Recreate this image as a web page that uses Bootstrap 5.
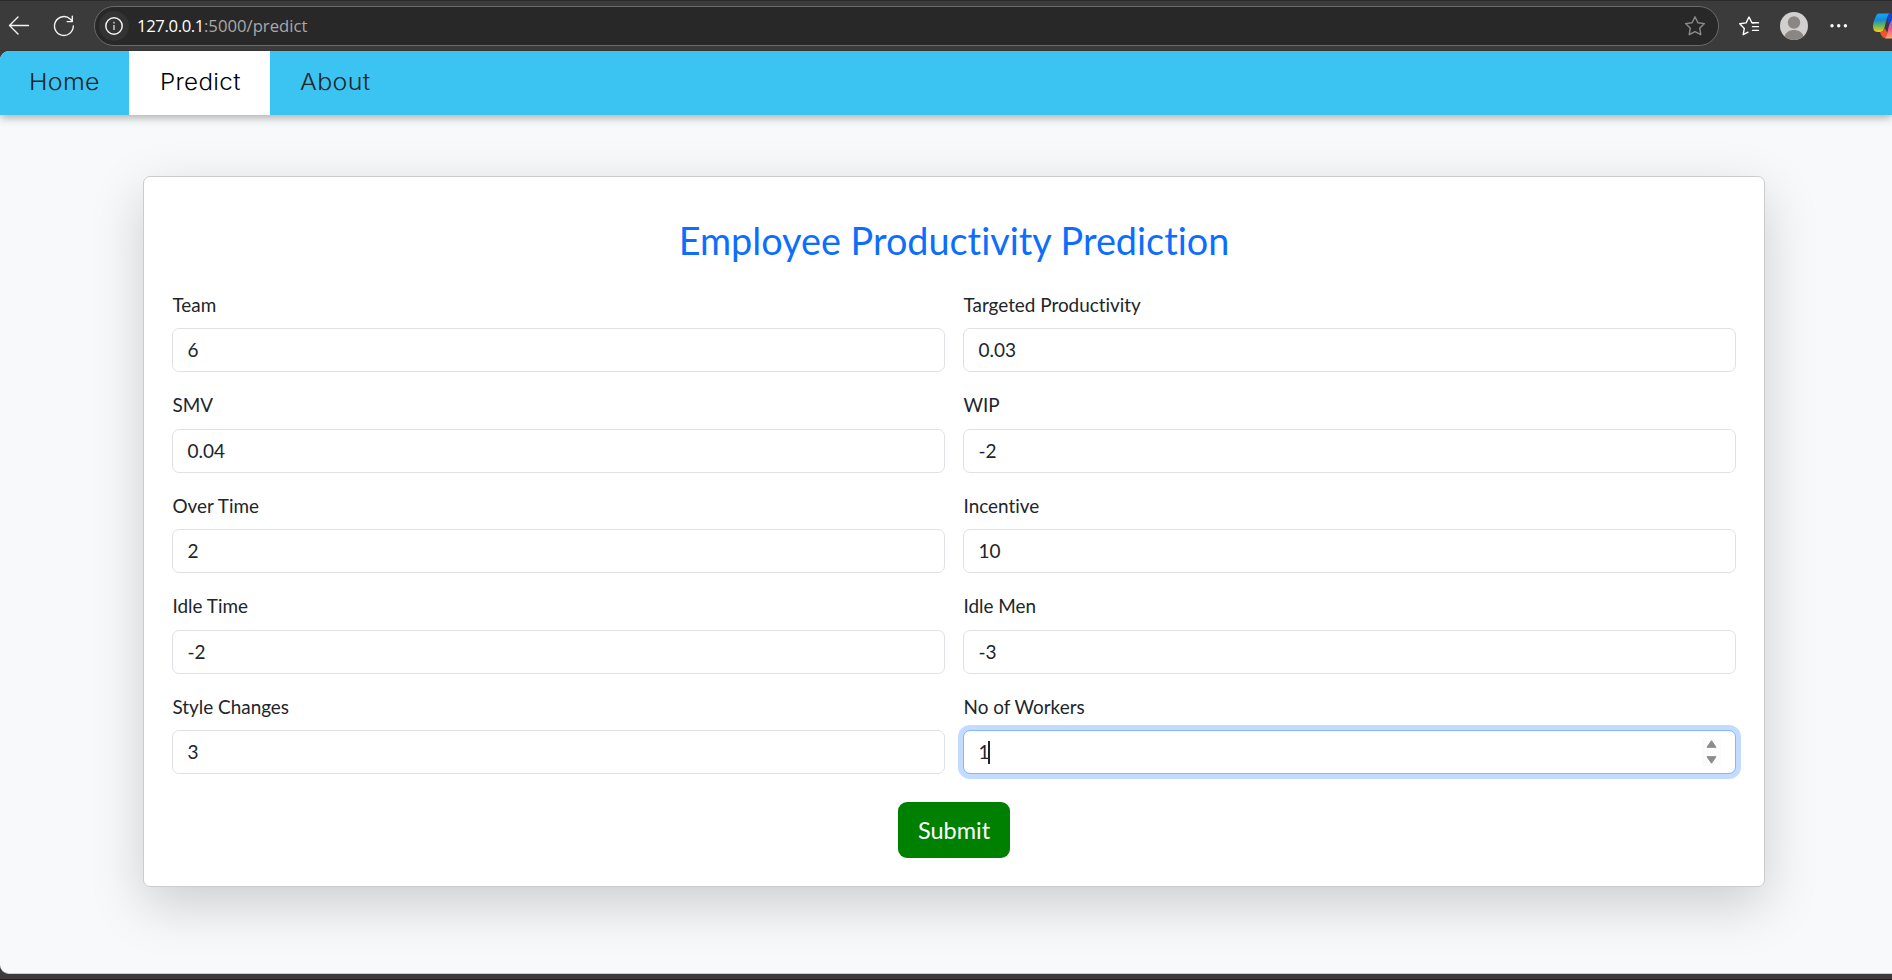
<!DOCTYPE html>
<html lang="en">
<head>
<meta charset="utf-8">
<meta name="viewport" content="width=device-width, initial-scale=1">
<title>Employee Productivity Prediction</title>
<link href="https://cdn.jsdelivr.net/npm/bootstrap@5.3.0/dist/css/bootstrap.min.css" rel="stylesheet">
<style>
  html, body { height: 980px; overflow: hidden; }
  body { background: #3b3b3b; font-family: Lato, sans-serif; font-size: 19px; line-height: 1.5; color: #212529; font-variant-ligatures: none; border-bottom: 1px solid #2b1a24; }
  .toolbar { height: 51px; border-top: 1px solid #2b2b2b; background: #3b3b3b; box-shadow: inset 0 -1px #353535; }
  .toolbar svg { display: block; flex: none; }
  .address { flex: none; width: 1625px; height: 40px; padding-left: 4px; padding-right: 12px; border: 1px solid #6a6a6a; border-radius: 20px; background: #282828; font-family: "Open Sans", sans-serif; font-size: 16.7px; color: #a9a9a9; }
  .address .host { color: #fff; letter-spacing: -.38px; }
  .site-info { width: 30px; height: 30px; background: #333; margin-right: 8px; }
  .viewport { height: 923px; background: #f8f9fa; border-radius: 9px 0 0 9px; overflow: hidden; border-bottom: 1px solid #cfcfcf; }
  .site-nav { height: 64px; background: #3bc4f1; box-shadow: 0 2px 9px rgba(0,0,0,.35); font-family: Inter, sans-serif; font-weight: 300; font-size: 22.5px; letter-spacing: .3px; }
  .site-nav .nav-link { display: flex; align-items: center; width: 129px; padding: 0 0 2px 29px; color: #212529; }
  .site-nav .nav-link span { transform: scaleX(1.11); transform-origin: left; }
  .site-nav .nav-link.active { width: 141px; padding-left: 30.5px; background: #fff; color: #000; }
  .site-nav .nav-link.active span { transform: scaleX(1.075); }
  .site-nav .nav-link:last-child { padding-left: 29.5px; }
  .predict-card { width: 1622px; height: 711px; margin: 61px 0 0 143px; padding: 37px 28px 0; border: 1px solid #ccc; border-radius: 7px; box-shadow: 0 18px 54px rgba(0,0,0,.175); }
  .predict-card h1 { font-size: 37.8px; font-weight: 400; line-height: 54px; color: #0d6efd; }
  .field-grid { display: grid; grid-template-columns: 773px 773px; column-gap: 18px; row-gap: 18.5px; margin-top: 22px; }
  .field-grid .form-label { display: block; height: 38px; line-height: 28px; margin: 0; padding: .7px 0 0 .5px; font-size: 18.9px; }
  .field-grid .form-control { height: 44px; padding: 0 14px 0 14.5px; font-size: 19px; line-height: 42px; border-color: #dee2e6; border-radius: 7px; }
  .field-grid .focused { border-color: #86b7fe; box-shadow: 0 0 0 5px rgba(13,110,253,.25); }
  .caret { width: 2px; height: 23px; background: #212529; margin-left: -1.5px; }
  .spinner-arrows { width: 19px; height: 28px; background: #fbfbfb; }
  .submit-btn { width: 112px; height: 56px; margin-top: 28px; padding: 1px 0 0; background: green; color: #fff; font-size: 23.5px; border: 0; border-radius: 9px; }
</style>
</head>
<body>
<header class="toolbar d-flex align-items-center overflow-hidden">
  <svg width="94" height="50" viewBox="0 1 94 50" fill="none" stroke="#f4f4f4" stroke-width="1.4" stroke-linecap="round" stroke-linejoin="round">
    <path d="M28.500 25.500H9.500M18 17l-8.500 8.500L18 34"/>
    <path d="M73.300 26a9.400 9.400 0 1 1-2.900-6.800l2 2M72.300 16.300v5.300h-5.200"/>
  </svg>
  <div class="address d-flex align-items-center">
    <span class="site-info rounded-circle d-flex align-items-center justify-content-center">
      <svg width="20" height="20" viewBox="0 0 20 20" fill="none" stroke="#f1f1f1" stroke-width="1.5"><circle cx="10" cy="10" r="8.200"/><path d="M10 9v5M10 5.700v1.700" stroke="#c8c8c8"/></svg>
    </span>
    <span class="host">127.0.0.1</span><span>:5000/predict</span>
    <svg class="ms-auto" width="22" height="22" viewBox="0 0 22 22" fill="none" stroke="#8b8b8b" stroke-width="1.4" stroke-linejoin="round"><path d="M11 1.800l2.900 5.900 6.500.9-4.700 4.600 1.100 6.500L11 16.600l-5.800 3.100 1.100-6.500L1.600 8.600l6.500-.9z"/></svg>
  </div>
  <svg width="173" height="50" viewBox="1719 1 173 50">
    <defs>
      <linearGradient id="pilotLeft" x1="0" y1="0" x2="0" y2="1"><stop offset="0" stop-color="#16a5f3"/><stop offset=".35" stop-color="#168bd8"/><stop offset=".65" stop-color="#67b756"/><stop offset="1" stop-color="#f8cf15"/></linearGradient>
      <linearGradient id="pilotRight" x1="0" y1="0" x2="0" y2="1"><stop offset="0" stop-color="#a35be8"/><stop offset=".5" stop-color="#f05696"/><stop offset="1" stop-color="#ffac60"/></linearGradient>
    </defs>
    <g fill="none" stroke="#fff" stroke-width="1.400" stroke-linejoin="round" stroke-linecap="round">
      <path d="M1753.500 22.900l-1.600-.2-2.900-5.700-2.900 5.900-6.400.9 4.600 4.600-1.100 6.300 4.800-2.500"/>
      <path d="M1752.500 22.800h6M1752.500 26.600h6M1752.500 30.400h6"/>
    </g>
    <circle cx="1794" cy="26" r="14" fill="#d2d0ce"/>
    <circle cx="1794" cy="22.500" r="6.200" fill="#8a8683"/>
    <path d="M1784.500 36.300c1.500-4.300 5-6.300 9.500-6.300s8 2 9.500 6.300a14 14 0 0 1-19 0z" fill="#8a8683"/>
    <g fill="#fff"><circle cx="1832" cy="25.700" r="1.700"/><circle cx="1838.700" cy="25.700" r="1.700"/><circle cx="1845.400" cy="25.700" r="1.700"/></g>
    <path d="M1887 13h5v9l-4 1z" fill="#1745c8"/>
    <path d="M1879 13.500h10c-3 4-3.200 13-6 17.500-1.300 1.500-7 1.500-9-.5-2.500-5 .5-11 2-14.500.6-1.400 1.500-2.300 3-2.500z" fill="url(#pilotLeft)"/>
    <path d="M1880 32c2.500 0 4-1.500 4.700-4l3.500 6c-.5 2-1.200 3.500-2.500 4-3.500.4-4.700-3-5.700-6z" fill="#f0532f"/>
    <path d="M1892 20v18.500h-7c1.500-1.500 2-4 2.700-7 .8-4 1.500-8 4.300-11.500z" fill="url(#pilotRight)"/>
  </svg>
</header>
<div class="viewport">
  <nav class="site-nav d-flex">
    <a class="nav-link" href="#"><span>Home</span></a>
    <a class="nav-link active" href="#"><span>Predict</span></a>
    <a class="nav-link" href="#"><span>About</span></a>
  </nav>
  <main class="predict-card card">
    <h1 class="text-center mb-0">Employee Productivity Prediction</h1>
    <form class="text-center">
      <div class="field-grid text-start">
        <div><label class="form-label">Team</label><div class="form-control">6</div></div>
        <div><label class="form-label">Targeted Productivity</label><div class="form-control">0.03</div></div>
        <div><label class="form-label">SMV</label><div class="form-control">0.04</div></div>
        <div><label class="form-label">WIP</label><div class="form-control">-2</div></div>
        <div><label class="form-label">Over Time</label><div class="form-control">2</div></div>
        <div><label class="form-label">Incentive</label><div class="form-control">10</div></div>
        <div><label class="form-label">Idle Time</label><div class="form-control">-2</div></div>
        <div><label class="form-label">Idle Men</label><div class="form-control">-3</div></div>
        <div><label class="form-label">Style Changes</label><div class="form-control">3</div></div>
        <div><label class="form-label">No of Workers</label>
          <div class="form-control focused d-flex align-items-center"><span>1</span><span class="caret"></span>
            <svg class="spinner-arrows ms-auto" viewBox="0 0 19 28" fill="#8b8b8b" stroke="#8b8b8b" stroke-linejoin="round"><path d="M5 9.300L9.500 2.700 14 9.300zM5 18.700h9l-4.500 6.500z"/></svg>
          </div>
        </div>
      </div>
      <button type="button" class="btn submit-btn">Submit</button>
    </form>
  </main>
</div>
<script src="https://cdn.jsdelivr.net/npm/bootstrap@5.3.0/dist/js/bootstrap.bundle.min.js"></script>
</body>
</html>
